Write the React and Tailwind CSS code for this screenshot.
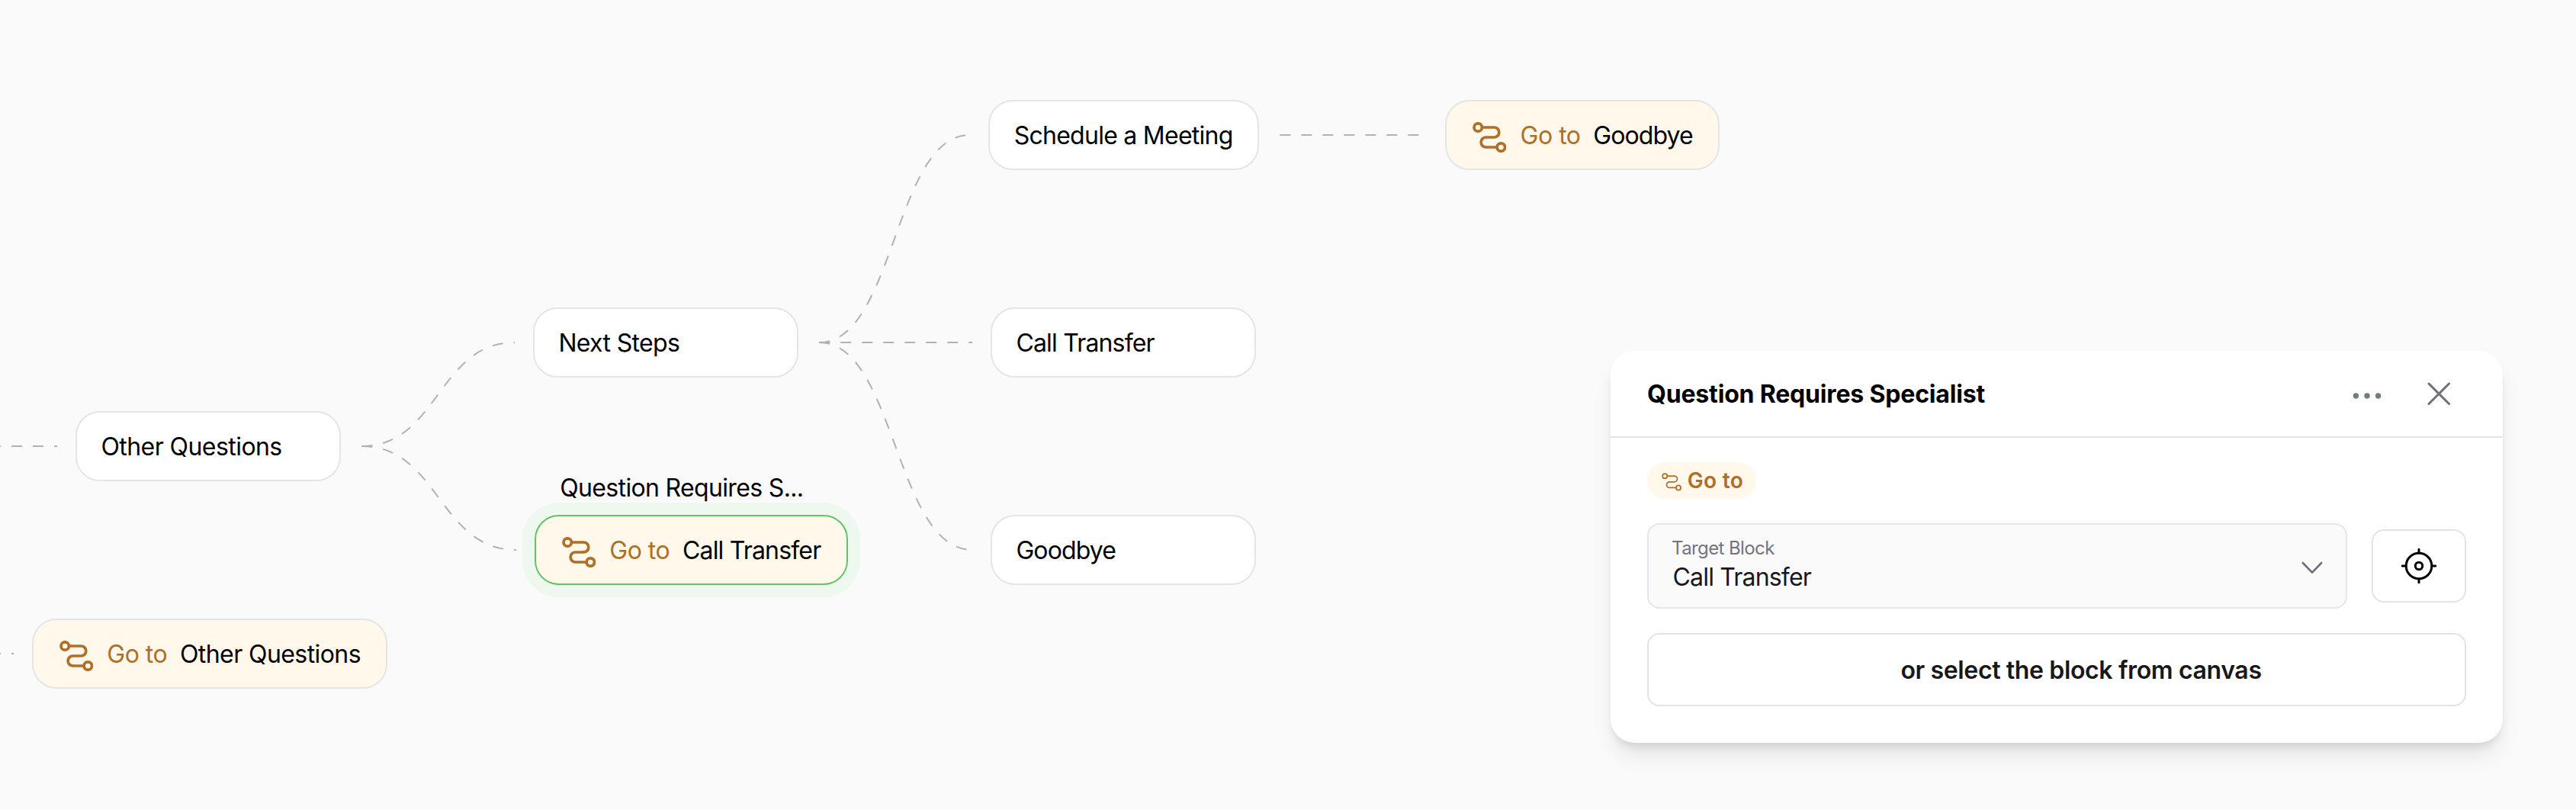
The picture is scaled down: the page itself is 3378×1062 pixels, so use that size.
import React from "react";

function RouteIcon({ className, strokeWidth = 3.7 }) {
  return (
    <svg viewBox="0 0 44.6 40" fill="none" stroke="currentColor" strokeWidth={strokeWidth} className={className}>
      <circle cx="7.2" cy="7" r="5.2" />
      <path d="M12.4 7H28.3a6.5 6.5 0 0 1 0 13H17.6a6.5 6.5 0 0 0 0 13H32" />
      <circle cx="37.3" cy="33" r="5.2" />
    </svg>
  );
}

function Node({ place, label, tracking }) {
  return (
    <div className={`absolute flex h-[92px] items-center rounded-[32px] border-2 border-[#e5e5e5] bg-white pl-[31.4px] pt-0.5 ${place}`}>
      <span className={tracking}>{label}</span>
    </div>
  );
}

function GoToNode({ place, label, tracking, selected }) {
  const frame = selected
    ? "border-[#66c266] shadow-[0_0_0_16px_#eef8ef]"
    : "border-[#e4e6e4]";
  return (
    <div className={`absolute flex h-[92px] items-center rounded-[32px] border-2 bg-[#fff8eb] pl-[33.5px] pt-0.5 ${frame} ${place}`}>
      <RouteIcon className="mt-1 h-10 w-[44.6px] text-[#b06f25]" />
      <span className="ml-[18.2px] w-[95.7px] tracking-[-0.5px] text-[#b06f25]">Go to</span>
      <span className={tracking}>{label}</span>
    </div>
  );
}

const edges = [
  "M-13 585H75",
  "M-13 857H18",
  "M474.3 585C574.6 585 574.6 449 675 449",
  "M474.3 585C575.6 585 575.6 721 677 721",
  "M1074.3 449C1173 449 1173 177 1271.5 177",
  "M1074.3 449H1275",
  "M1074.3 449C1174 449 1174 721 1275 721",
  "M1678.4 177H1872",
];

function Canvas() {
  return (
    <>
      <svg width="3378" height="1062" className="absolute inset-0" fill="none" stroke="#b1b1b7" strokeWidth="2" strokeDasharray="14 14">
        {edges.map((d) => (
          <path key={d} d={d} />
        ))}
      </svg>
      <Node place="left-[99px] top-[539px] w-[348px]" label="Other Questions" tracking="tracking-[-0.56px]" />
      <GoToNode place="left-[42px] top-[811px] w-[465.5px]" label="Other Questions" tracking="tracking-[-0.58px]" />
      <Node place="left-[699px] top-[403px] w-[348px]" label="Next Steps" tracking="tracking-[-0.66px]" />
      <span className="absolute left-[734.3px] top-[620px] tracking-[-0.66px]">Question Requires S...</span>
      <GoToNode place="left-[701px] top-[675px] w-[411px]" label="Call Transfer" tracking="tracking-[-0.82px]" selected />
      <Node place="left-[1296.3px] top-[131px] w-[354.3px]" label="Schedule a Meeting" tracking="tracking-[-0.74px]" />
      <Node place="left-[1299px] top-[403px] w-[348px]" label="Call Transfer" tracking="tracking-[-0.82px]" />
      <Node place="left-[1299px] top-[675px] w-[348px]" label="Goodbye" tracking="tracking-[-0.9px]" />
      <GoToNode place="left-[1895.3px] top-[131px] w-[359.7px]" label="Goodbye" tracking="tracking-[-0.9px]" />
    </>
  );
}

function Panel() {
  return (
    <section className="absolute left-[2112px] top-[460px] flex h-[514px] w-[1170px] flex-col rounded-[32px] bg-white shadow-[0_20px_30px_-6px_rgba(0,0,0,0.1),0_8px_12px_-4px_rgba(0,0,0,0.1)]">
      <header className="flex h-[114px] items-center border-b-2 border-[#e5e5eb] pl-12 pr-[68px]">
        <h2 className="flex-1 pt-0.5 font-bold tracking-[-0.17px]">Question Requires Specialist</h2>
        <svg viewBox="0 0 38 8" className="mt-[5px] h-2 w-[38px] text-[#717d75]" fill="currentColor">
          <circle cx="4.4" cy="4" r="3.7" />
          <circle cx="19" cy="4" r="3.7" />
          <circle cx="33.6" cy="4" r="3.7" />
        </svg>
        <svg viewBox="0 0 32 32" className="ml-[59px] h-8 w-8 text-[#6f6e7a]" fill="none" stroke="currentColor" strokeWidth="3" strokeLinecap="round">
          <path d="M3 3l26.5 26.5M29.5 3L3 29.5" />
        </svg>
      </header>
      <div className="flex flex-col items-start px-12 pt-8">
        <div className="flex h-12 w-[143px] items-center rounded-full bg-[#fff8eb] pl-[19px] text-[28px] font-semibold text-[#b06f25]">
          <RouteIcon strokeWidth={3} className="mt-1 h-[23.6px] w-[26.3px]" />
          <span className="ml-[7.5px] tracking-[0.3px]">Go to</span>
        </div>
        <div className="mt-8 flex w-full items-center gap-8">
          <div className="flex h-28 w-[918px] items-center justify-between rounded-2xl border-2 border-[#e5e5ea] bg-[#fafafa] px-[29px]">
            <div className="-mt-1 flex flex-col">
              <span className="ml-px text-2xl leading-8 tracking-[-0.6px] text-[#75737d]">Target Block</span>
              <span className="ml-[2.5px] mt-0.5 tracking-[-0.82px] text-[#18181b]">Call Transfer</span>
            </div>
            <svg viewBox="0 0 30 18" className="mt-[3px] h-[18px] w-[30px] text-[#6f6e7a]" fill="none" stroke="currentColor" strokeWidth="2.6" strokeLinecap="round" strokeLinejoin="round">
              <path d="M2.8 3L15 15.6L27.2 3" />
            </svg>
          </div>
          <button className="flex h-24 w-[124px] items-center justify-center rounded-2xl border-2 border-[#e3e3e3]">
            <svg viewBox="0 0 48 48" className="h-12 w-12 text-black" fill="none" stroke="currentColor" strokeWidth="3" strokeLinecap="round">
              <circle cx="24" cy="24" r="16.8" />
              <circle cx="24" cy="24" r="4.7" />
              <path d="M24 2.2v4.5M24 41.3v4.5M2.2 24h4.5M41.3 24h4.5" />
            </svg>
          </button>
        </div>
        <button className="mt-8 flex h-24 w-full items-center justify-center rounded-2xl border-2 border-[#e3e3e3] pl-16 pt-0.5 text-[#18181b]">
          <span className="font-semibold tracking-[-0.36px]">or select the block from canvas</span>
        </button>
      </div>
    </section>
  );
}

export default function App() {
  return (
    <main className="relative h-[1062px] w-[3378px] overflow-hidden whitespace-nowrap bg-[#fafafa] font-['Inter',sans-serif] text-[32px] leading-10 text-black">
      <Canvas />
      <Panel />
    </main>
  );
}
